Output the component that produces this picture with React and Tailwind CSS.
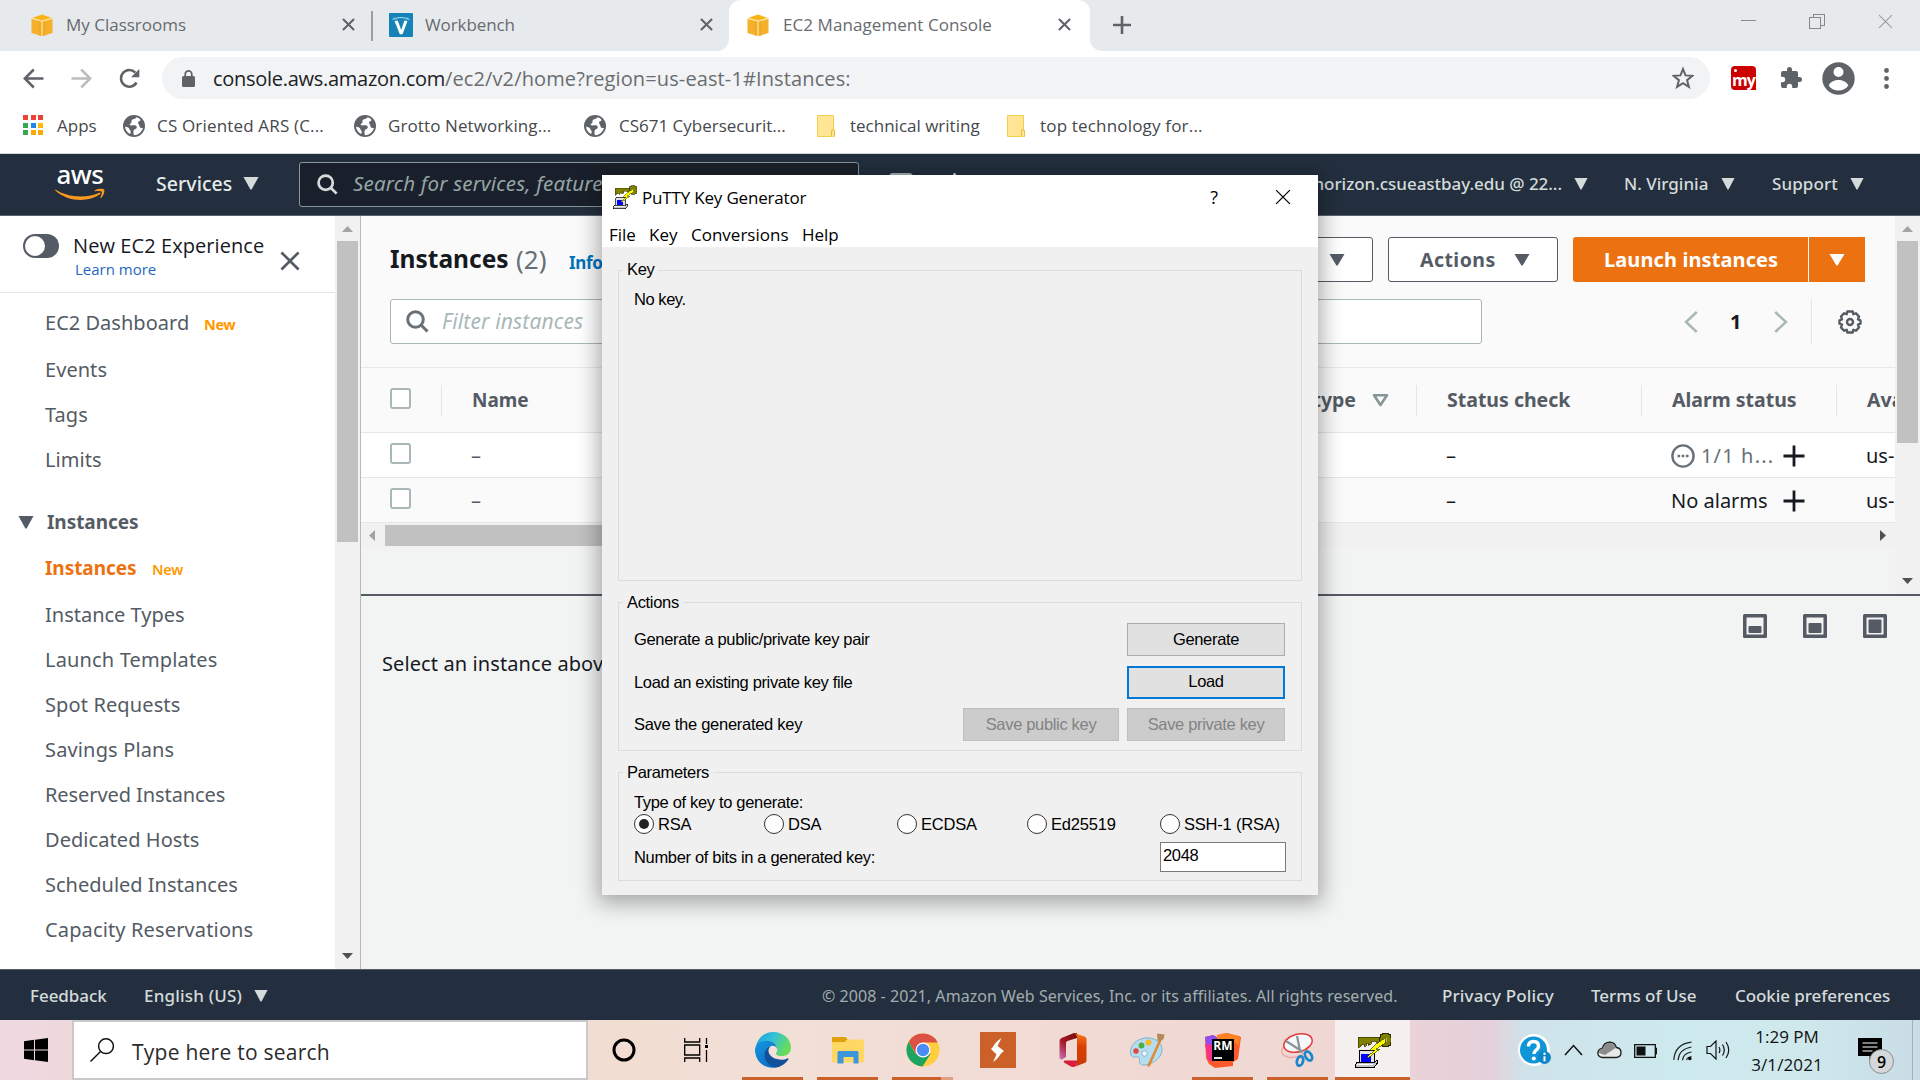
import React from 'react';

const SEGOE = "font-['Open_Sans',sans-serif]";
const EMBER = "font-['Noto_Sans',sans-serif]";
const ARIAL = "font-['Liberation_Sans',Arial,sans-serif]";

function T({ c = '', children }) {
  return <span className={'block shrink-0 whitespace-nowrap ' + c}>{children}</span>;
}

/* ---------- small drawings ---------- */

function Tri({ c = 'w-[16px] h-[12px]', color = '#d5dbdb' }) {
  return (
    <svg className={'block shrink-0 ' + c} viewBox="0 0 16 12" preserveAspectRatio="none">
      <path d="M0.5 0h15L8.6 11.6h-1.2z" fill={color} />
    </svg>
  );
}

function Cross({ c, color = '#5f6368', w = 2.2 }) {
  return (
    <svg className={'block shrink-0 ' + c} viewBox="0 0 14 14" preserveAspectRatio="none">
      <path d="M1 1l12 12M13 1L1 13" stroke={color} strokeWidth={w} fill="none" />
    </svg>
  );
}

function Cube({ c = '' }) {
  return (
    <svg className={'block w-[22px] h-[22px] shrink-0 ' + c} viewBox="0 0 22 22">
      <path d="M0.5 4.5L8 6.3v15L0.5 19z" fill="#f5b02c" />
      <path d="M21.500 4.500L14 6.300v15L21.500 19z" fill="#f5b02c" />
      <path d="M7.500 6.200h7v15.300L11 22l-3.500-.5z" fill="#f0ab22" />
      <path d="M1 4L11 0.500 21 4 11 6.700z" fill="#f9b514" />
      <path d="M0.800 4.400L11 7.200l10.200-2.800" stroke="#fde3a6" strokeWidth="1.200" fill="none" />
      <path d="M11 7.200v14.300" stroke="#fde3a6" strokeWidth="1.300" />
    </svg>
  );
}

function Globe({ c = '' }) {
  return (
    <svg className={'block w-[22px] h-[22px] shrink-0 ' + c} viewBox="0 0 22 22">
      <circle cx="11" cy="11" r="11" fill="#5f6368" />
      <path d="M13.500 2.200C12 4.500 9.500 3.500 8.600 5.500c-.6 1.500.6 2.200-1.100 3C6 9.200 6.800 10.500 8.500 10.400c2.200-.2 5.300-.4 5.300 1.800 0 2.200-3.300 1.500-3.300 4.100 0 1.700-.3 3.200.8 4 3.600-.3 7.600-3 8.700-7.600-1.800.6-3.400-.1-3.600-1.800-.2-1.600-1.700-2-1.300-3.600.3-1.500 2.200-.7 2.400-2.300C17 3.700 15.500 2.700 13.500 2.200z" fill="#fff" />
      <path d="M2 11.500c1.600.6 4 .8 4.300 2.600.3 1.600 1.700 1.300 1.400 3.200l-.5 1.700C4.300 17.500 2.200 15 2 11.500z" fill="#fff" />
    </svg>
  );
}

function Folder({ c = '' }) {
  return (
    <svg className={'block w-[18px] h-[22px] shrink-0 ' + c} viewBox="0 0 18 22">
      <path d="M.5.500h16v14.500l1 .5v6H.5z" fill="#ffe594" stroke="#f5cf4b" />
      <path d="M14.500 21.500v-5.500q0-1.300 1.500-1.300t1.500 1.300v5.500" fill="#ffe594" stroke="#e8be32" />
    </svg>
  );
}

function Mag({ c, color, w = 3 }) {
  return (
    <svg className={'block shrink-0 ' + c} viewBox="0 0 23 23">
      <circle cx="9.500" cy="9.500" r="7.800" fill="none" stroke={color} strokeWidth={w} />
      <path d="M15 15l6.500 6.500" stroke={color} strokeWidth={w} />
    </svg>
  );
}

function PuttyIcon({ c }) {
  return (
    <svg className={'block shrink-0 ' + c} viewBox="0 0 36 36" shapeRendering="crispEdges">
      <path d="M3 5h21v5h-3v-1h-5v3h-2v1h-1v-2h-2v3H9v-2H7v1H5v2H3z" fill="#808000" stroke="#3f3f00" strokeWidth="0.8" />
      <path d="M27 1h6v1h2v3h1v5h-1v3h-2v1h-6v-1h-2v-3h-1V5h1V2h2z" fill="#808000" stroke="#2a2a00" strokeWidth="1" />
      <path d="M29 6h3v4h-3z" fill="#b9b98a" />
      <path d="M5 18.500h14v12H4v-11z" fill="#e0e0e0" stroke="#000" />
      <path d="M5.500 22h10v8h-10z" fill="#0000ff" />
      <path d="M2 30.500h17l3-2v3l-3 4H0.500v-3z" fill="#c6c6c6" stroke="#000" />
      <path d="M2 32h16" stroke="#fff" />
      <path d="M30 6l-10 7-5 5h5l-8 7 1 1 12-9h-4l9-6z" fill="#ffff00" stroke="#3f3f00" strokeWidth="0.700" />
    </svg>
  );
}

function Radio({ on }) {
  return (
    <span className="flex size-[20px] shrink-0 items-center justify-center rounded-full border border-[#333] bg-white">
      {on && <span className="size-[10px] rounded-full bg-[#222]" />}
    </span>
  );
}

/* ---------- browser chrome ---------- */

function TabStrip() {
  return (
    <div className={SEGOE + ' flex h-[51px] shrink-0 items-center bg-[#e6eaed] text-[17px] text-[#686b6f]'}>
      <Cube c="mb-[2px] ml-[31px]" />
      <T c="mb-[2px] ml-[13px] w-[276px]">My Classrooms</T>
      <Cross c="mb-[2px] size-[13px]" />
      <div className="ml-[16px] h-[30px] w-[2px] shrink-0 bg-[#9a9da1]" />
      <svg className="mb-[2px] ml-[16px] block h-[24px] w-[24px] shrink-0" viewBox="0 0 24 24">
        <rect width="24" height="24" rx="1" fill="#1583b7" />
        <path d="M5.500 8l3.300-.4L12.200 17l3.200-9.400 3.100.4-5 13.200h-2.700z" fill="#fff" />
        <path d="M3.500 6.500Q12 2.500 20.500 6.500M5 4.500l2 2M19 4.500l-2 2" stroke="#a9dcf0" fill="none" />
      </svg>
      <T c="mb-[2px] ml-[12px] w-[275px] tracking-[-0.1px]">Workbench</T>
      <Cross c="mb-[2px] size-[13px]" />
      <div className="ml-[4px] h-[51px] w-[12px] shrink-0 bg-white">
        <div className="h-full w-full rounded-br-[12px] bg-[#e6eaed]" />
      </div>
      <div className="flex h-[51px] w-[361px] shrink-0 items-center rounded-t-[12px] bg-white">
        <Cube c="mb-[2px] ml-[18px]" />
        <T c="mb-[2px] ml-[14px] w-[275px] tracking-[0.07px]">EC2 Management Console</T>
        <Cross c="mb-[2px] size-[13px]" />
      </div>
      <div className="h-[51px] w-[12px] shrink-0 bg-white">
        <div className="h-full w-full rounded-bl-[12px] bg-[#e6eaed]" />
      </div>
      <svg className="mb-[2px] ml-[11px] block size-[18px] shrink-0" viewBox="0 0 18 18">
        <path d="M9 0v18M0 9h18" stroke="#5f6368" strokeWidth="2.600" />
      </svg>
      <div className="mr-[27px] ml-auto flex h-[51px] items-start pt-[14px]">
        <div className="mt-[6px] h-px w-[15px] bg-[#8a8d90]" />
        <svg className="ml-[53px] block h-[15px] w-[16px]" viewBox="0 0 16 15" shapeRendering="crispEdges">
          <path d="M0.500 3.500h11v11h-11zM4 3.500v-3h11v11h-3" fill="none" stroke="#85888b" />
        </svg>
        <Cross c="ml-[53px] size-[15px]" color="#9b9ea1" w={1.1} />
      </div>
    </div>
  );
}

function AddressBar() {
  return (
    <div className={SEGOE + ' flex h-[54px] shrink-0 items-center bg-white'}>
      <svg className="ml-[23px] block size-[21px] shrink-0" viewBox="0 0 21 21">
        <path d="M20.500 10.500H2M10.800 1.500l-9 9 9 9" fill="none" stroke="#5f6368" strokeWidth="2.500" />
      </svg>
      <svg className="ml-[27px] block size-[21px] shrink-0" viewBox="0 0 21 21">
        <path d="M.5 10.500H19M10.200 1.500l9 9-9 9" fill="none" stroke="#bbbdc0" strokeWidth="2.500" />
      </svg>
      <svg className="ml-[27px] block size-[21px] shrink-0" viewBox="0 0 21 21">
        <path d="M17.500 14.500A8.300 8.300 0 1 1 16.300 4.600" fill="none" stroke="#5f6368" strokeWidth="2.500" />
        <path d="M20.300 1v8.200h-8.200z" fill="#5f6368" />
      </svg>
      <div className="ml-[22px] flex h-[42px] w-[1548px] shrink-0 items-center rounded-full bg-[#f1f3f4]">
        <svg className="ml-[20px] block h-[17px] w-[13px] shrink-0" viewBox="0 0 13 17">
          <rect y="6" width="13" height="11" rx="1.500" fill="#5f6368" />
          <path d="M3.200 7V4.200a3.300 3.300 0 0 1 6.600 0V7" fill="none" stroke="#5f6368" strokeWidth="1.700" />
        </svg>
        <T c="ml-[18px] w-[232px] pt-[1px] text-[20px] tracking-[-0.28px] text-[#202124]">console.aws.amazon.com</T>
        <T c="w-[410px] pt-[1px] text-[20px] tracking-[0.12px] text-[#6a6d71]">/ec2/v2/home?region=us-east-1#Instances:</T>
        <svg className="mr-[16px] ml-auto block size-[22px] shrink-0" viewBox="0 0 22 22">
          <path d="M11 2l2.500 6.400 6.900.4-5.300 4.400 1.800 6.700L11 16.200l-5.900 3.700 1.800-6.700L1.600 8.800l6.900-.4z" fill="none" stroke="#5f6368" strokeWidth="2" />
        </svg>
      </div>
      <div className="relative ml-[21px] flex h-[24px] w-[25px] shrink-0 items-end justify-center rounded-[4px] rounded-br-none bg-[#cc0000] text-[16px] leading-[19px] font-bold tracking-[-0.8px] text-white">
        my
        <span className="absolute top-[3px] left-[3px] size-[3px] rounded-full bg-white" />
      </div>
      <svg className="ml-[23px] block size-[24px] shrink-0" viewBox="0 0 24 24">
        <path d="M20.500 11H19V7a2 2 0 0 0-2-2h-4V3.500a2.500 2.500 0 0 0-5 0V5H4a2 2 0 0 0-2 2v3.800h1.500a2.700 2.700 0 0 1 0 5.400H2V20a2 2 0 0 0 2 2h3.800v-1.500a2.700 2.700 0 0 1 5.400 0V22H17a2 2 0 0 0 2-2v-4h1.500a2.500 2.500 0 0 0 0-5z" fill="#5f6368" />
      </svg>
      <svg className="ml-[19px] block size-[33px] shrink-0" viewBox="0 0 33 33">
        <circle cx="16.500" cy="16.500" r="16.200" fill="#5f6368" />
        <circle cx="16.500" cy="10" r="5" fill="#fff" />
        <path d="M6.700 23.400c2-4 6-5.400 9.800-5.400s7.800 1.400 9.800 5.400c-2 3.200-5.800 5-9.800 5s-7.800-1.800-9.800-5z" fill="#fff" />
      </svg>
      <svg className="ml-[29px] block h-[21px] w-[5px] shrink-0" viewBox="0 0 5 21">
        <circle cx="2.500" cy="2.500" r="2.400" fill="#5f6368" />
        <circle cx="2.500" cy="10.500" r="2.400" fill="#5f6368" />
        <circle cx="2.500" cy="18.500" r="2.400" fill="#5f6368" />
      </svg>
    </div>
  );
}

function Bookmarks() {
  const dots = ['#ea4335', '#ea4335', '#ea4335', '#34a853', '#1e88e5', '#fbbc05', '#34a853', '#fbab05', '#fbab05'];
  return (
    <div className={SEGOE + ' flex h-[49px] shrink-0 items-start border-b border-[#d4d6da] bg-white text-[17px] leading-[22px] text-[#45484c]'}>
      <div className="mt-[10px] ml-[23px] grid size-[20px] shrink-0 grid-cols-3 gap-[2.5px]">
        {dots.map((d, i) => (
          <span key={i} className="block" style={{ background: d }} />
        ))}
      </div>
      <div className="mt-[10px] flex shrink-0">
        <T c="ml-[14px] w-[41px]">Apps</T>
        <Globe c="ml-[25px]" />
        <T c="ml-[12px] w-[167px] tracking-[0.17px]">CS Oriented ARS (C...</T>
        <Globe c="ml-[30px]" />
        <T c="ml-[12px] w-[162px] tracking-[0.1px]">Grotto Networking...</T>
        <Globe c="ml-[34px]" />
        <T c="ml-[13px] w-[165px]">CS671 Cybersecurit...</T>
        <Folder c="ml-[33px]" />
        <T c="ml-[15px] w-[129px]">technical writing</T>
        <Folder c="ml-[28px]" />
        <T c="ml-[15px] w-[162px] tracking-[0.18px]">top technology for...</T>
      </div>
    </div>
  );
}

/* ---------- AWS console ---------- */

function AwsNav() {
  return (
    <div className={EMBER + ' flex h-[62px] shrink-0 items-center border-b border-[#5b636e] bg-[#232f3e] text-[17px] font-medium text-[#d5dbdb]'}>
      <div className="ml-[55px] flex h-[34px] w-[50px] shrink-0 flex-col">
        <T c="h-[20px] text-center text-[26px] leading-[12px] font-medium tracking-[-0.5px] text-white">aws</T>
        <svg className="block h-[13px] w-[50px]" viewBox="0 0 50 13">
          <path d="M.5 1.500C11 9 31 11 45 4.500l.8 1.300C33 15 13 14 .2 2.500z" fill="#f7981f" />
          <path d="M40 2.200c3-1.600 8-1.700 9-.8s0 6-3 8.600c-.6.400-.9.200-.6-.4 1-2.400 1.800-5 1.300-5.800s-3.700-.8-6.300-.6c-.9.100-1-.6-.4-1z" fill="#f7981f" />
        </svg>
      </div>
      <T c="mb-[2px] ml-[51px] w-[77px] text-[19.500px] tracking-[0.05px] text-[#e6eaea]">Services</T>
      <Tri c="ml-[10px] mb-[2px] h-[13px] w-[16px]" />
      <div className="ml-[40px] flex h-[45px] w-[560px] shrink-0 items-center overflow-hidden rounded-[3px] border border-[#879596] bg-[#1a202b]">
        <Mag c="ml-[17px] size-[21px]" color="#d5dbdb" w={3} />
        <T c="mb-[2px] ml-[15px] text-[20.500px] font-normal tracking-[0.2px] text-[#95a5a6] italic">Search for services, features</T>
      </div>
      <svg className="ml-[30px] block h-[24px] w-[80px] shrink-0" viewBox="0 0 80 24">
        <rect width="24" height="24" rx="4" fill="#aab3b9" />
        <path d="M65.500 -1l3 5h-6z" fill="#d5dbdb" />
      </svg>
      <div className="mr-[56px] mb-[2px] ml-auto flex shrink-0 items-center">
        <T c="tracking-[-0.04px]">horizon.csueastbay.edu @ 22...</T>
        <Tri c="ml-[12px] h-[12px] w-[14px]" />
        <T c="ml-[36px] w-[85px]">N. Virginia</T>
        <Tri c="ml-[12px] h-[12px] w-[14px]" />
        <T c="ml-[37px] w-[67px] tracking-[0.1px]">Support</T>
        <Tri c="ml-[11px] h-[12px] w-[14px]" />
      </div>
    </div>
  );
}

function Arrow({ dir, color }) {
  const d = {
    up: 'M0 6L5.500 0 11 6z',
    down: 'M0 0h11L5.500 6z',
    left: 'M6 0v11L0 5.500z',
    right: 'M0 0v11l6-5.500z',
  }[dir];
  const v = dir === 'up' || dir === 'down';
  return (
    <svg className={v ? 'block h-[6px] w-[11px] shrink-0' : 'block h-[11px] w-[6px] shrink-0'} viewBox={v ? '0 0 11 6' : '0 0 6 11'}>
      <path d={d} fill={color} />
    </svg>
  );
}

const moreItems = [
  ['Instance Types', ''],
  ['Launch Templates', 'tracking-[0.15px]'],
  ['Spot Requests', 'tracking-[0.12px]'],
  ['Savings Plans', 'tracking-[0.15px]'],
  ['Reserved Instances', 'tracking-[-0.08px]'],
  ['Dedicated Hosts', 'tracking-[0.06px]'],
  ['Scheduled Instances', ''],
  ['Capacity Reservations', 'tracking-[0.14px]'],
];

function Sidebar() {
  return (
    <div className="flex w-[361px] shrink-0 border-r border-[#b5bbbb] bg-white">
      <div className={EMBER + ' flex w-[335px] shrink-0 flex-col text-[20px] text-[#545b64]'}>
        <div className="flex h-[77px] shrink-0 items-start border-b border-[#e3e6e6]">
          <div className="mt-[18px] ml-[23px] flex h-[24px] w-[36px] shrink-0 items-center rounded-full bg-[#545b64] pl-[2px]">
            <div className="size-[19.500px] rounded-full bg-white" />
          </div>
          <div className="ml-[14px] w-[207px] shrink-0 pt-[18px]">
            <T c={SEGOE + ' leading-[24px] tracking-[0.08px] text-[#16191f]'}>New EC2 Experience</T>
            <T c={SEGOE + ' pl-[2px] text-[15px] leading-[22px] text-[#1f66c0]'}>Learn more</T>
          </div>
          <Cross c="mt-[35px] size-[20px]" color="#545b64" w={1.9} />
        </div>
        <div className="flex flex-col pt-[6px] pl-[45px]">
          <div className="flex h-[48px] items-center">
            <T c="w-[159px] tracking-[0.02px]">EC2 Dashboard</T>
            <T c="pt-[4px] text-[14.500px] font-bold tracking-[-0.4px] text-[#ff9900]">New</T>
          </div>
          {['Events', 'Tags', 'Limits'].map((t) => (
            <div key={t} className="flex h-[45px] items-center"><T c="tracking-[0.05px]">{t}</T></div>
          ))}
        </div>
        <div className="mt-[17px] flex h-[46px] shrink-0 items-center pl-[18px]">
          <Tri c="h-[13px] w-[16px]" color="#545b64" />
          <T c="ml-[13px] text-[19px] font-bold tracking-[-0.05px]">Instances</T>
        </div>
        <div className="flex flex-col pl-[45px]">
          <div className="flex h-[47px] items-center">
            <T c="w-[107px] text-[19px] font-bold tracking-[-0.05px] text-[#ec7211]">Instances</T>
            <T c="pt-[3px] text-[14.500px] font-semibold tracking-[-0.2px] text-[#ff9900]">New</T>
          </div>
          {moreItems.map(([t, c]) => (
            <div key={t} className="flex h-[45px] items-center"><T c={c}>{t}</T></div>
          ))}
        </div>
      </div>
      <div className="flex w-[25px] shrink-0 flex-col items-center bg-[#f1f1f1] pt-[10px]">
        <Arrow dir="up" color="#a3a3a3" />
        <div className="mt-[9px] h-[301px] w-[21px] bg-[#c1c1c1]" />
        <div className="mt-auto mb-[10px]"><Arrow dir="down" color="#505050" /></div>
      </div>
    </div>
  );
}

function Divider({ c = 'h-[31px]' }) {
  return <div className={'w-px shrink-0 bg-[#e3e6e6] ' + c} />;
}

function CheckBox() {
  return <span className="block size-[21px] shrink-0 rounded-[3px] border-2 border-[#aab7b8] bg-white" />;
}

function Plus() {
  return (
    <svg className="block size-[22px] shrink-0" viewBox="0 0 22 22">
      <path d="M11 .5v21M.5 11h21" stroke="#16191f" strokeWidth="2.800" />
    </svg>
  );
}

function Row({ c, alarm }) {
  return (
    <div className={'flex h-[45px] shrink-0 items-center overflow-hidden border-b border-[#e6e8e8] text-[20px] text-[#16191f] ' + c}>
      <div className="mb-[3px] w-[80px] shrink-0 pl-[29px]"><CheckBox /></div>
      <T c="w-[975px] pt-[2px] pl-[30px] text-[#545b64]">–</T>
      <T c="w-[225px] pt-[2px] pl-[30px]">–</T>
      <div className="flex w-[195px] shrink-0 items-center pt-[2px] pl-[30px]">{alarm}</div>
      <T c="pt-[2px] pl-[30px]">us-</T>
    </div>
  );
}

function InstancesPane() {
  return (
    <div className="flex h-[378px] shrink-0">
      <div className="flex w-[1534px] shrink-0 flex-col bg-[#fafafa]">
        <div className="flex h-[83px] shrink-0 items-start pt-[21px]">
          <div className="flex h-[45px] items-center pl-[29px]">
            <T c="w-[126px] text-[24.500px] font-bold text-[#16191f]">Instances</T>
            <T c="w-[53px] text-[26px] text-[#687078]">(2)</T>
            <T c="pt-[6px] text-[17px] font-bold tracking-[-0.3px] text-[#0073bb]">Info</T>
          </div>
          <div className="mr-[30px] ml-auto flex h-[45px] shrink-0 text-[19.500px] font-bold text-[#545b64]">
            <div className="flex w-[205px] items-center justify-between rounded-[3px] border border-[#545b64] bg-white pr-[27px] pl-[31px]">
              <T>Connect</T>
              <Tri color="#545b64" />
            </div>
            <div className="ml-[15px] flex w-[170px] items-center justify-between rounded-[3px] border border-[#545b64] bg-white pr-[27px] pl-[31px]">
              <T c="tracking-[0.45px]">Actions</T>
              <Tri color="#545b64" />
            </div>
            <div className="ml-[15px] flex w-[235px] items-center rounded-l-[3px] bg-[#ec7211] text-[20px] text-white">
              <T c="pl-[31px] tracking-[0.1px]">Launch instances</T>
            </div>
            <div className="ml-px flex w-[56px] items-center justify-center bg-[#ec7211]">
              <Tri color="#ffffff" />
            </div>
          </div>
        </div>
        <div className="flex h-[68px] shrink-0 items-start">
          <div className="ml-[29px] flex h-[45px] w-[1092px] shrink-0 items-center rounded-[3px] border border-[#aab7b8] bg-white">
            <Mag c="ml-[15px] size-[23px]" color="#687078" w={3} />
            <T c="ml-[13px] pt-[1px] text-[21px] tracking-[0.15px] text-[#aab7b8] italic">Filter instances</T>
          </div>
          <div className="ml-[202px] flex h-[45px] shrink-0 items-center">
            <svg className="block h-[22px] w-[14px]" viewBox="0 0 14 22"><path d="M12.800 1L2 11l10.800 10" fill="none" stroke="#aab7b8" strokeWidth="2.500" /></svg>
            <T c="ml-[32px] w-[44px] text-[20px] font-bold text-[#16191f]">1</T>
            <svg className="block h-[22px] w-[14px]" viewBox="0 0 14 22"><path d="M1.200 1L12 11 1.200 21" fill="none" stroke="#aab7b8" strokeWidth="2.500" /></svg>
            <Divider c="ml-[23px] h-[45px]" />
            <svg className="ml-[26px] block size-[24px]" viewBox="0 0 24 24">
              <path d="M9.300 1.500h5.400l.6 2.700 2.700-.9 3 3.300-1 2.700 2.500 1v3.400l-2.500 1 1 2.700-3 3.300-2.700-.9-.6 2.700H9.300l-.6-2.700-2.700.9-3-3.300 1-2.700-2.500-1v-3.400l2.500-1-1-2.700 3-3.300 2.700.9z" fill="none" stroke="#545b64" strokeWidth="2.400" strokeLinejoin="round" />
              <circle cx="12" cy="12" r="3" fill="none" stroke="#545b64" strokeWidth="2.400" />
            </svg>
          </div>
        </div>
        <div className="flex h-[66px] shrink-0 items-center overflow-hidden border-y border-[#e6e8e8] text-[19.500px] font-bold text-[#545b64]">
          <div className="mb-[3px] w-[80px] shrink-0 pl-[29px]"><CheckBox /></div>
          <Divider />
          <T c="w-[750px] pl-[30px] text-[19px]">Name</T>
          <div className="flex w-[224px] shrink-0 items-center justify-end pr-[27px]">
            <T>Instance type</T>
            <svg className="ml-[16px] block h-[13px] w-[17px]" viewBox="0 0 17 13">
              <path d="M2 1.300h13L8.500 11z" fill="none" stroke="#879596" strokeWidth="2.600" strokeLinejoin="round" />
            </svg>
          </div>
          <Divider />
          <T c="w-[224px] pl-[30px]">Status check</T>
          <Divider />
          <T c="w-[194px] pl-[30px]">Alarm status</T>
          <Divider />
          <T c="pl-[30px]">Availability Zone</T>
        </div>
        <Row
          c="bg-white"
          alarm={
            <>
              <svg className="block size-[24px] shrink-0" viewBox="0 0 24 24">
                <circle cx="12" cy="12" r="10.600" fill="none" stroke="#687078" strokeWidth="2.400" />
                <path d="M6.500 12h2.600M10.700 12h2.600M14.900 12h2.600" stroke="#687078" strokeWidth="2.600" />
              </svg>
              <T c="mr-[10px] ml-[6px] w-[72px] tracking-[1.15px] text-[#687078]">1/1 h...</T>
              <Plus />
            </>
          }
        />
        <Row
          c="bg-[#fafafa]"
          alarm={
            <>
              <T c="mr-[10px] w-[102px]">No alarms</T>
              <Plus />
            </>
          }
        />
        <div className="flex h-[25px] shrink-0 items-center bg-[#f1f1f1]">
          <div className="ml-[8px]"><Arrow dir="left" color="#a3a3a3" /></div>
          <div className="ml-[10px] h-[21px] w-[700px] bg-[#c1c1c1]" />
          <div className="mr-[9px] ml-auto"><Arrow dir="right" color="#505050" /></div>
        </div>
        <div className="grow bg-[#f2f3f3]" />
      </div>
      <div className="flex w-[25px] shrink-0 flex-col items-center bg-[#f1f1f1] pt-[10px]">
        <Arrow dir="up" color="#a3a3a3" />
        <div className="mt-[9px] h-[202px] w-[21px] bg-[#c1c1c1]" />
        <div className="mt-auto mb-[10px]"><Arrow dir="down" color="#505050" /></div>
      </div>
    </div>
  );
}

function PaneIcon({ top }) {
  return (
    <svg className="block size-[24px] shrink-0" viewBox="0 0 24 24">
      <rect width="24" height="24" rx="1.500" fill="#545b64" />
      <rect x="3.500" y="3.500" width="17" height="17" fill="#f2f3f3" />
      <rect x="5.500" y={top} width="13" height={19 - top} rx="1" fill="#545b64" />
    </svg>
  );
}

function Console() {
  return (
    <div className="flex h-[753px] shrink-0">
      <Sidebar />
      <div className={EMBER + ' flex w-[1559px] shrink-0 flex-col bg-[#f2f3f3]'}>
        <InstancesPane />
        <div className="flex grow items-start border-t-2 border-[#545b64]">
          <T c="mt-[54px] ml-[21px] text-[20px] leading-[28px] tracking-[0.1px] text-[#16191f]">Select an instance above</T>
          <div className="mt-[18px] mr-[33px] ml-auto flex gap-[36px]">
            <PaneIcon top={12} />
            <PaneIcon top={9} />
            <PaneIcon top={5.5} />
          </div>
        </div>
      </div>
    </div>
  );
}

function AwsFooter() {
  return (
    <div className={EMBER + ' flex h-[51px] shrink-0 items-center border-t border-[#545b64] bg-[#232f3e] pt-[1px] text-[17px] font-medium text-[#d5dbdb]'}>
      <T c="ml-[30px] w-[114px] tracking-[-0.05px]">Feedback</T>
      <T c="w-[98px] tracking-[0.2px]">English (US)</T>
      <Tri c="ml-[12px] h-[12px] w-[14px]" />
      <T c="ml-auto w-[620px] text-[16px] font-normal tracking-[0.05px] text-[#a2adae]">© 2008 - 2021, Amazon Web Services, Inc. or its affiliates. All rights reserved.</T>
      <T c="w-[149px] tracking-[0.15px]">Privacy Policy</T>
      <T c="w-[144px]">Terms of Use</T>
      <T c="mr-[30px] w-[155px] tracking-[-0.07px]">Cookie preferences</T>
    </div>
  );
}

/* ---------- PuTTYgen window ---------- */

function Group({ title, c, children }) {
  return (
    <fieldset className={'block shrink-0 border border-[#dcdcdc] ' + c}>
      <legend className="ml-[4px] block h-[20px] px-[4px]">{title}</legend>
      {children}
    </fieldset>
  );
}

function Btn({ c = '', children }) {
  return <div className={'flex h-[33px] shrink-0 items-center justify-center whitespace-nowrap ' + c}>{children}</div>;
}

function PuttyWindow() {
  return (
    <div className={ARIAL + ' absolute top-[175px] left-[602px] flex h-[720px] w-[716px] flex-col bg-[#f0f0f0] text-[16.500px] tracking-[-0.33px] text-black shadow-[0_4px_20px_4px_rgba(0,0,0,0.32)]'}>
      <div className={SEGOE + ' flex h-[44px] shrink-0 items-center bg-white text-[17px] tracking-normal'}>
        <PuttyIcon c="mb-[1px] ml-[11px] size-[24px]" />
        <T c="ml-[5px] pt-[2px] tracking-[-0.18px]">PuTTY Key Generator</T>
        <T c="mr-[57px] ml-auto text-[18px]">?</T>
        <Cross c="mr-[27px] size-[16px]" color="#000" w={1.1} />
      </div>
      <div className={SEGOE + ' flex h-[28px] shrink-0 items-center bg-white pt-[3px] text-[17px] tracking-normal'}>
        <T c="ml-[7px] w-[40px]">File</T>
        <T c="w-[42px]">Key</T>
        <T c="w-[111px]">Conversions</T>
        <T>Help</T>
      </div>
      <Group title="Key" c="mt-[13px] ml-[16px] h-[321px] w-[684px] [&>legend]:leading-[19px]">
        <T c="mt-[9px] ml-[15px] leading-[20px] tracking-[-0.45px]">No key.</T>
      </Group>
      <Group title="Actions" c="mt-[11px] ml-[16px] h-[159px] w-[684px] [&>legend]:leading-[21px]">
        <div className="flex flex-col gap-[9.500px] pt-[11px] pr-[16px] pl-[15px]">
          <div className="flex items-center">
            <T c="mr-auto">Generate a public/private key pair</T>
            <Btn c="w-[158px] border border-[#adadad] bg-[#e1e1e1]">Generate</Btn>
          </div>
          <div className="flex items-center">
            <T c="mr-auto tracking-[-0.36px]">Load an existing private key file</T>
            <Btn c="w-[158px] border-2 border-[#0078d7] bg-[#e1e1e1] pb-[2px]">Load</Btn>
          </div>
          <div className="flex items-center">
            <T c="mr-auto tracking-[-0.28px]">Save the generated key</T>
            <Btn c="w-[156px] border border-[#bfbfbf] bg-[#cccccc] text-[#838383]">Save public key</Btn>
            <Btn c="ml-[8px] w-[158px] border border-[#bfbfbf] bg-[#cccccc] text-[#838383]">Save private key</Btn>
          </div>
        </div>
      </Group>
      <Group title="Parameters" c="mt-[11px] ml-[16px] h-[119px] w-[684px] [&>legend]:leading-[21px]">
        <T c="mt-[9px] ml-[15px] leading-[23px]">Type of key to generate:</T>
        <div className="ml-[15px] flex h-[20px] items-center tracking-[-0.2px]">
          <Radio on /><T c="ml-[4px] w-[106px]">RSA</T>
          <Radio /><T c="ml-[4px] w-[109px]">DSA</T>
          <Radio /><T c="ml-[4px] w-[106px]">ECDSA</T>
          <Radio /><T c="ml-[4px] w-[109px]">Ed25519</T>
          <Radio /><T c="ml-[4px]">SSH-1 (RSA)</T>
        </div>
        <div className="mt-[8px] ml-[15px] flex items-center">
          <T c="w-[526px]">Number of bits in a generated key:</T>
          <div className="h-[30px] w-[126px] shrink-0 border border-[#7a7a7a] bg-white pl-[2px] leading-[25px]">2048</div>
        </div>
      </Group>
    </div>
  );
}

/* ---------- taskbar ---------- */

function Slot({ line, active, children }) {
  return (
    <div className={'flex h-[60px] w-[75px] shrink-0 flex-col items-center justify-end ' + (active ? 'bg-[#f6efef]' : '')}>
      <div className="mb-[9px] flex h-[36px] items-center">{children}</div>
      {line === 'stack' ? (
        <div className="flex h-[3px] w-[61px]">
          <div className="w-[49px] bg-[#ca602a]" />
          <div className="w-[12px] bg-[#dfa083]" />
        </div>
      ) : (
        <div className={'h-[3px] ' + (line ? (active ? 'w-full bg-[#ca602a]' : 'w-[61px] bg-[#ca602a]') : 'w-full')} />
      )}
    </div>
  );
}

function Taskbar() {
  return (
    <div className={SEGOE + ' flex h-[60px] shrink-0 overflow-hidden bg-[linear-gradient(90deg,#efd9e1_0,#efd8dc_70px,#f1ddd2_620px,#f2dfd6_800px,#f1dad4_1100px,#efd7d3_1330px,#e8d2d9_1440px,#e4d0da_1490px,#cfe2ea_1525px,#cdeaee_1680px,#cfe8ec_1800px,#c8dce6_1920px)]'}>
      <svg className="mt-[18px] ml-[24px] block size-[24px] shrink-0" viewBox="0 0 24 24">
        <path d="M0 3.300L10 1.800v9.700H0zM11 1.700L24 0v11.500H11zM0 12.500h10v9.700L0 20.700zM11 12.500h13V24l-13-1.700z" fill="#000" />
      </svg>
      <div className="ml-[24px] flex h-[60px] w-[516px] shrink-0 items-center border-2 border-[#c9c9c9] bg-white">
        <svg className="ml-[16px] block size-[24px] shrink-0" viewBox="0 0 24 24">
          <circle cx="16" cy="8.200" r="7.400" fill="none" stroke="#111" strokeWidth="1.500" />
          <path d="M10.500 13.500L.5 23.500" stroke="#111" strokeWidth="1.500" />
        </svg>
        <T c="ml-[18px] pt-[5px] text-[21px] tracking-[0.25px] text-[#2b2b2b]">Type here to search</T>
      </div>
      <div className="flex w-[72px] shrink-0 items-center justify-center">
        <svg className="block size-[24px]" viewBox="0 0 24 24"><circle cx="12" cy="12" r="10" fill="none" stroke="#000" strokeWidth="3" /></svg>
      </div>
      <div className="mr-[3px] flex w-[72px] shrink-0 items-center justify-center">
        <svg className="block size-[24px]" viewBox="0 0 24 24">
          <path d="M.7 -3v7h15V-3M.7 27v-7h15v7M.7 7h15v10h-15zM22.500 -3v9M22.500 12v15" fill="none" stroke="#000" strokeWidth="1.300" />
          <rect x="21" y="7" width="3" height="3" />
        </svg>
      </div>
      <Slot line>
        <svg className="block size-[36px]" viewBox="0 0 36 36">
          <defs>
            <linearGradient id="edgeTop" x1="0" y1="0" x2="1" y2="0.400"><stop offset="0" stopColor="#1b9de2" /><stop offset=".5" stopColor="#35c1d8" /><stop offset="1" stopColor="#66dd5a" /></linearGradient>
            <linearGradient id="edgeSide" x1="0" y1="0" x2="0.600" y2="1"><stop offset="0" stopColor="#1595e0" /><stop offset="1" stopColor="#0c6fc4" /></linearGradient>
          </defs>
          <path d="M1 14C3 5 10 0 18 0c10 0 18 7 18 15.500 0 6-4.500 8.500-9 8.500-3.500 0-6-.8-6-2.300 0-1 1.300-1.700 1.300-4 0-4-4.500-7.200-9.800-7.200C6.500 10.500 2.500 12 1 14z" fill="url(#edgeTop)" />
          <path d="M0 18C0 12 5.500 8.800 11.500 8.800 18 8.800 22 13 22 17.500c0-2.200-2-3.700-4.500-3.700-3 0-5.300 3-5.300 7.500 0 7 6 14 13 12.700-2.200.9-4.500 1.800-7 1.800C7.500 36 0 27.500 0 18z" fill="url(#edgeSide)" />
          <path d="M15.500 14.200C12 15.500 9.500 19 9.500 23c0 7 6.500 13 13 12.200 4.500-.9 8.500-4.200 10.800-7.700.5-.9-.2-1.500-1-1.100-1.500.8-3.600 1.300-5.800 1.300-6 0-12.500-3.300-13-8.200-.1-2.500.8-4.200 2-5.300z" fill="#11509b" />
        </svg>
      </Slot>
      <Slot line>
        <svg className="block h-[36px] w-[34px]" viewBox="0 0 34 36">
          <path d="M1 6q0-1 1-1h12q1 0 2 1.500L17 8l-2.500 2.500H1z" fill="#dfa20b" />
          <path d="M1 10.300h12.500L16 7.500h15.500q1.500 0 1.500 1.500v20q0 1.500-1.500 1.500h-29Q1 30.500 1 29z" fill="#ffd764" />
          <path d="M6.500 31.500V20.500q0-1.500 1.500-1.500h18q1.500 0 1.500 1.500v11h-5V25h-10v6.500z" fill="#3c96dc" />
        </svg>
      </Slot>
      <Slot line="stack">
        <svg className="block size-[34px]" viewBox="0 0 34 34">
          <circle cx="17" cy="17" r="16.500" fill="#ffcd40" />
          <path d="M2.700 8.700A16.500 16.500 0 0 0 16.500 33.500L24.500 21 17 17 9.500 20.800z" fill="#1da462" />
          <path d="M2.700 8.700L10 21l7-4V9.500h14.700A16.500 16.500 0 0 0 2.700 8.700z" fill="#dd5144" />
          <circle cx="17" cy="17" r="7.500" fill="#fff" />
          <circle cx="17" cy="17" r="6.200" fill="#4c8bf5" />
        </svg>
      </Slot>
      <Slot>
        <div className="flex size-[36px] items-center justify-center bg-[#cc6029]">
          <svg className="block h-[24px] w-[13px]" viewBox="0 0 13 24">
            <path d="M10.500 0C6.500 2.500 3.500 5.500 1.500 9.500L0 11l5.500 5.500L2 24c4-2.500 6-5.500 8-8.500l3-2.500-6.500-5z" fill="#fff" />
          </svg>
        </div>
      </Slot>
      <Slot>
        <svg className="block h-[36px] w-[28px]" viewBox="0 0 28 36">
          <defs>
            <linearGradient id="officeLeft" x1="0.800" y1="0" x2="0.100" y2="1"><stop offset="0" stopColor="#7a0c0c" /><stop offset=".5" stopColor="#a81a28" /><stop offset="1" stopColor="#c770b8" /></linearGradient>
            <linearGradient id="officeRight" x1="0" y1="0" x2="0" y2="1"><stop offset="0" stopColor="#f47a1f" /><stop offset=".4" stopColor="#dc3f00" /><stop offset="1" stopColor="#c43a08" /></linearGradient>
          </defs>
          <path d="M15 1L2.500 6Q.5 7 .5 9v16.500q0 2.500 2.500 2l4-2.500V11q0-1.500 1.500-2L18 6V1z" fill="url(#officeLeft)" />
          <path d="M15 1l10.500 3.500Q27.500 5.200 27.500 7v21.500q0 2-2 2.500L15 35q3-1.500 3-4.500V6q0-3.500-3-5z" fill="url(#officeRight)" />
          <path d="M5.500 28.500H18V31q-.5 4-4 4-1.500 0-2.500-.7L5 30.500q-1-1.500.5-2z" fill="#d81e3c" />
        </svg>
      </Slot>
      <Slot>
        <svg className="block size-[36px]" viewBox="0 0 36 36">
          <path d="M15 6C6 7 0 14 0.500 21c.2 3 2 4.500 4.500 4 3-.7 5 .2 4.500 3.500C9 31.500 11 33.500 15 33c9-1 17-8 17-15.500C32 10 24 5 15 6z" fill="#b6dcf0" stroke="#7fb3d0" />
          <circle cx="14.500" cy="21.500" r="2.800" fill="#eef6fa" stroke="#7fb3d0" />
          <circle cx="6" cy="19" r="2.700" fill="#e0463a" />
          <circle cx="11.500" cy="13.500" r="2.900" fill="#4cae3c" />
          <circle cx="18.500" cy="10.500" r="3" fill="#f7b928" />
          <path d="M29 8l2.300.8L20 34l-2.500 1.500.3-3z" fill="#e08a30" />
          <path d="M27 1.500l7.500 1-.8 4L30.500 9.500 27.500 8.500z" fill="#b08a5a" />
        </svg>
      </Slot>
      <Slot line>
        <svg className="block size-[36px]" viewBox="0 0 36 36">
          <path d="M0 5l8-2 6 3 8-5 14 4-3 22-5 3v4l-18 2-6-4-3-6z" fill="#fc5a2a" />
          <path d="M0 5l8-2 5 3v16L3 27z" fill="#8f4ff0" />
          <path d="M0 12l8 1v17l-5-2z" fill="#f5318b" />
          <path d="M12 3l8-2 15 3-1 10-7-6H12z" fill="#fd8224" />
          <rect x="7" y="7" width="22" height="22" fill="#000" />
          <text x="8.300" y="18" fontFamily="Open Sans" fontWeight="700" fontSize="12" fill="#fff">RM</text>
          <path d="M9 26h8" stroke="#fff" strokeWidth="1.800" />
        </svg>
      </Slot>
      <Slot line>
        <svg className="block size-[36px]" viewBox="0 0 36 36">
          <ellipse cx="15" cy="17" rx="13.500" ry="8" transform="rotate(-15 15 17)" fill="none" stroke="#f0a5a5" strokeWidth="1.300" />
          <ellipse cx="18" cy="11" rx="14.500" ry="8.800" transform="rotate(-15 18 11)" fill="#f6f8fa" stroke="#e23b3b" strokeWidth="1.500" />
          <path d="M17 4l3.500 17M6 9l17 11" stroke="#8a949c" strokeWidth="2.200" />
          <ellipse cx="20" cy="29" rx="3" ry="4.800" transform="rotate(15 20 29)" fill="none" stroke="#1d87c9" strokeWidth="2.800" />
          <ellipse cx="28.500" cy="24" rx="5" ry="3" transform="rotate(60 28.500 24)" fill="none" stroke="#1d87c9" strokeWidth="2.800" />
        </svg>
      </Slot>
      <Slot line active><PuttyIcon c="size-[36px]" /></Slot>
      <div className="ml-auto flex h-[60px] shrink-0 items-start text-[#111]">
        <svg className="mt-[14px] block size-[33px]" viewBox="0 0 33 33">
          <circle cx="16" cy="16" r="16" fill="#fff" />
          <circle cx="15.500" cy="16" r="13.500" fill="#0f96d8" />
          <path d="M10.500 12.500Q10.500 7.500 15.500 7.500T20.500 12q0 2.500-2.600 4.300-2 1.400-2 3.700" fill="none" stroke="#fff" strokeWidth="3.400" />
          <circle cx="15.800" cy="24.500" r="2.100" fill="#fff" />
          <circle cx="26.500" cy="23.500" r="6.500" fill="#0f86c8" />
          <path d="M26.500 22.300v5" stroke="#fff" strokeWidth="2" /><circle cx="26.500" cy="19.800" r="1.200" fill="#fff" />
        </svg>
        <svg className="mt-[24px] ml-[13px] block h-[12px] w-[19px]" viewBox="0 0 19 12"><path d="M1 11l8.500-9.500L18 11" fill="none" stroke="#111" strokeWidth="1.500" /></svg>
        <svg className="mt-[21px] ml-[14px] block h-[18px] w-[25px]" viewBox="0 0 25 18">
          <path d="M5.500 16.500a4.500 4.500 0 0 1-.3-9Q7 1 13 1.200q5 .2 6.300 5.300 4.700.6 4.700 5t-4.500 5z" fill="#e9e9e9" stroke="#222" strokeWidth="1.400" />
          <path d="M2 12q0-4.500 4-4.500Q8 1.800 13 2q4.500.300 5.500 5L8 14z" fill="#8b8b8b" />
        </svg>
        <svg className="mt-[24px] ml-[12px] block h-[14px] w-[23px]" viewBox="0 0 23 14">
          <path d="M.7.700h20.600v12.600H.7zM21.500 4.500h1.200v5h-1.200" fill="none" stroke="#111" strokeWidth="1.300" />
          <rect x="2.500" y="2.500" width="9" height="9" fill="#111" />
        </svg>
        <svg className="mt-[21px] ml-[16px] block h-[20px] w-[19px]" viewBox="0 0 19 20">
          <path d="M.8 19Q2 3 18.500 1.200M5 19.200Q6 8 18.500 6M9.500 19.200q.8-7 9-8.200M13.500 19.200q.5-2.800 5-3.700" fill="none" stroke="#222" strokeWidth="1.200" />
          <circle cx="16.800" cy="17.500" r="1.800" />
        </svg>
        <svg className="mt-[20px] ml-[14px] block h-[20px] w-[24px]" viewBox="0 0 24 20">
          <path d="M1 6.500h3.500L10 1v18l-5.500-5.500H1z" fill="none" stroke="#111" strokeWidth="1.200" />
          <path d="M13 7q1.800 3 0 6M16.500 4.500q3.500 5.500 0 11M20 2q5.500 8 0 16" fill="none" stroke="#111" strokeWidth="1.200" />
        </svg>
        <div className="ml-[21px] w-[72px] text-center text-[17px] leading-[28px]">
          <T c="pt-[3px]">1:29 PM</T>
          <T c="tracking-[0.1px]">3/1/2021</T>
        </div>
        <div className="relative mt-[18px] ml-[35px] h-[36px] w-[36px]">
          <svg className="block h-[24px] w-[24px]" viewBox="0 0 24 24">
            <path d="M0 0h24v18h-7l-5.500 5.500V18H0z" />
            <path d="M4.500 5h15M4.500 9h15M4.500 13h10" stroke="#fff" strokeWidth="1.200" />
          </svg>
          <span className="absolute top-[11px] left-[11px] flex size-[25px] items-center justify-center rounded-full border border-[#8b8f92] bg-[#d4d8da] text-[16px] leading-none font-semibold text-black">9</span>
        </div>
        <div className="mr-[7px] ml-[18px] h-[60px] w-px bg-[#9db1bb]" />
      </div>
    </div>
  );
}

export default function App() {
  return (
    <div className="relative flex h-[1080px] w-[1920px] flex-col overflow-hidden bg-white">
      <TabStrip />
      <AddressBar />
      <Bookmarks />
      <AwsNav />
      <Console />
      <AwsFooter />
      <Taskbar />
      <PuttyWindow />
    </div>
  );
}
